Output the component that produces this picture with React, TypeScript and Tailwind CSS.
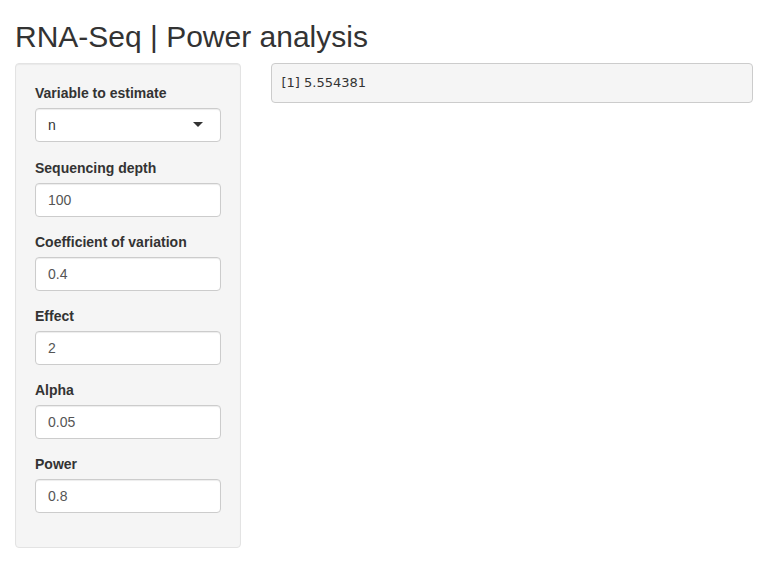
export default function App() {
  const fields = [
    { label: 'Sequencing depth', value: '100' },
    { label: 'Coefficient of variation', value: '0.4' },
    { label: 'Effect', value: '2' },
    { label: 'Alpha', value: '0.05' },
    { label: 'Power', value: '0.8' },
  ];

  return (
    <div className="min-h-[576px] bg-white px-[15px] font-['Liberation_Sans',Arial,sans-serif] text-[14px] leading-[20px] text-[#333]">
      <h2 className="mt-5 mb-[10px] text-[30px] leading-[33px] font-medium">RNA-Seq | Power analysis</h2>
      <div className="-mx-[15px] flex">
        <div className="w-1/3 px-[15px]">
          <div className="rounded border border-[#e3e3e3] bg-[#f5f5f5] p-[19px] shadow-[inset_0_1px_1px_rgba(0,0,0,0.05)]">
            <div className="mb-[16px]">
              <label className="mb-[5px] block font-bold">Variable to estimate</label>
              <div className="relative h-[34px] rounded border border-[#ccc] bg-white px-3 py-[6px] text-[14px] leading-[20px] text-[#333] shadow-[inset_0_1px_1px_rgba(0,0,0,0.075)]">
                n
                <span className="absolute top-1/2 right-[17px] mt-[-3px] h-0 w-0 border-x-[5px] border-t-[5px] border-x-transparent border-t-[#333]" />
              </div>
            </div>
            {fields.map((f, i) => (
              <div key={i} className="mb-[15px]">
                <label className="mb-[5px] block font-bold">{f.label}</label>
                <input
                  type="text"
                  readOnly
                  value={f.value}
                  className="block h-[34px] w-full rounded border border-[#ccc] bg-white px-3 py-[6px] text-[14px] leading-[20px] text-[#555] shadow-[inset_0_1px_1px_rgba(0,0,0,0.075)] outline-none"
                />
              </div>
            ))}
          </div>
        </div>
        <div className="w-2/3 px-[15px]">
          <pre className="mb-[10px] rounded border border-[#ccc] bg-[#f5f5f5] p-[9.5px] font-['DejaVu_Sans',sans-serif] text-[13px] leading-[18.57px] text-[#333]">[1] 5.554381</pre>
        </div>
      </div>
    </div>
  );
}
